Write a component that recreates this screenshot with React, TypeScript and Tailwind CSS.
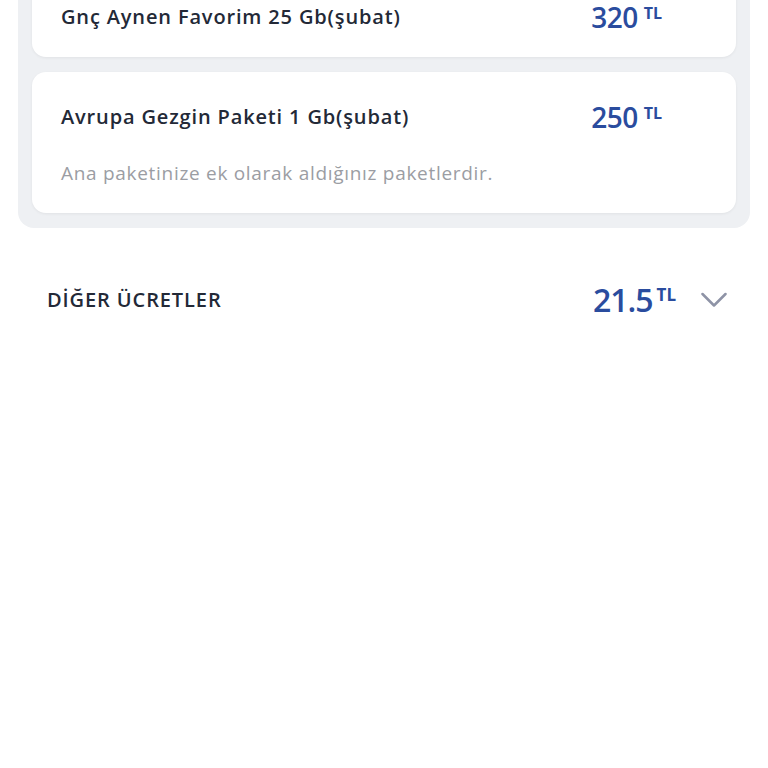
const packages = [
  { name: 'Gnç Aynen Favorim 25 Gb(şubat)', price: '320', note: '' },
  { name: 'Avrupa Gezgin Paketi 1 Gb(şubat)', price: '250', note: 'Ana paketinize ek olarak aldığınız paketlerdir.' },
];

function Price({ value }: { value: string }) {
  return (
    <div className="flex items-start gap-[6px] text-[#2a4c9e]">
      <span className="text-[28px] font-semibold leading-none tracking-[-0.5px]">{value}</span>
      <span className="text-[16px] font-bold leading-none mt-[2px]">TL</span>
    </div>
  );
}

export default function App() {
  return (
    <div className="min-h-screen bg-white font-['Open_Sans',sans-serif] overflow-hidden">
      {/* Ek paketler */}
      <div className="mx-[18px] -mt-[42px] bg-[#eef0f3] rounded-b-[16px] px-[14px] pt-[14px] pb-[15px] flex flex-col gap-[15px]">
        {packages.map((p, i) => (
          <div key={i} className="bg-white rounded-[14px] shadow-[0_1px_3px_rgba(0,0,0,0.06)] pl-[29px] pr-[74px] pt-[31px] pb-[26px]">
            <div className="flex items-center justify-between h-[28px]">
              <span className="text-[20px] font-semibold text-[#232937] tracking-[0.85px]">{p.name}</span>
              <Price value={p.price} />
            </div>
            {p.note && (
              <p className="mt-[30px] mb-[2px] text-[19px] text-[#9b9da3] leading-[24px] tracking-[0.7px]">{p.note}</p>
            )}
          </div>
        ))}
      </div>

      {/* Diğer ücretler */}
      <div className="mt-[56px] pl-[47px] pr-[41px] flex items-center justify-between h-[32px]">
        <span className="text-[20px] font-semibold text-[#232937] uppercase tracking-[0.9px]">DİĞER ÜCRETLER</span>
        <div className="flex items-center gap-[25px]">
          <div className="flex items-start gap-[4px] text-[#2a4c9e]">
            <span className="text-[32px] font-semibold leading-none tracking-[-1px]">21.5</span>
            <span className="text-[17px] font-bold leading-none mt-[2px]">TL</span>
          </div>
          <svg width="26" height="16" viewBox="0 0 26 16" fill="none" className="text-[#8e93a6]">
            <polyline points="1.5,2 13,13.5 24.5,2" stroke="currentColor" strokeWidth="2.5" strokeLinecap="round" strokeLinejoin="round" />
          </svg>
        </div>
      </div>
    </div>
  );
}
